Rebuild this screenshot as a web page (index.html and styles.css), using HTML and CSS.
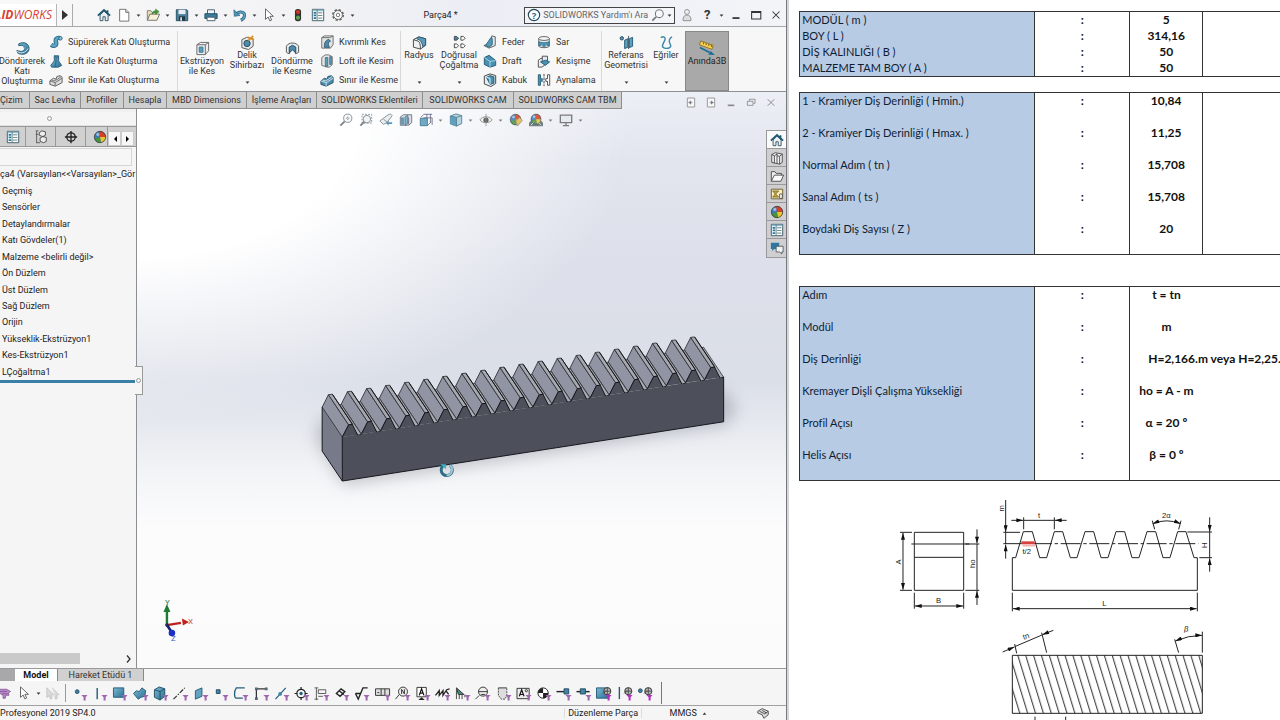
FILE: index.html
```html
<!DOCTYPE html>
<html lang="tr">
<head>
<meta charset="utf-8">
<title>Parça4</title>
<link rel="stylesheet" href="styles.css">
</head>
<body>
<svg class="defs" aria-hidden="true">
<defs>
<linearGradient id="blue" x1="0" y1="0" x2="1" y2="1"><stop offset="0" stop-color="#7db9d2"/><stop offset="1" stop-color="#2b6f93"/></linearGradient>
<symbol id="arr" viewBox="0 0 6 4"><path d="M0.5 0.5h5L3 3.5z" fill="#333"/></symbol>
<symbol id="home" viewBox="0 0 16 16"><path d="M3.5 8v6.5h3.300V10h2.600v4.500h3.300V8L8 3.500z" fill="#e8f0f4" stroke="#2c4a58"/><path d="M1 8.800L8 2.200l7 6.600M12 2.500v3" fill="none" stroke="#1f5873" stroke-width="2"/></symbol>
<symbol id="new" viewBox="0 0 16 16"><path d="M3 1.500h7L13.500 5v10H3z" fill="#fff" stroke="#666"/><path d="M10 1.500V5h3.500" fill="#ddd" stroke="#666"/></symbol>
<symbol id="open" viewBox="0 0 16 16"><path d="M1.500 14V3h4l1.500 2h5v2" fill="#eadfb6" stroke="#777"/><path d="M1.500 14L4.500 7h11l-3 7z" fill="#f7f1d8" stroke="#666"/><path d="M7 7c0-3 2-4 4-4V1l4 3.200-4 3V5.300c-2 0-3 .7-4 1.700z" fill="#449a38" stroke="#2c6f25" stroke-width=".5"/></symbol>
<symbol id="save" viewBox="0 0 16 16"><path d="M1.500 2h12l1 1v11.500h-13z" fill="#4a7f9b" stroke="#22485c"/><path d="M4 2h8v5H4z" fill="#e6eef2"/><path d="M4.500 9.500h7v5h-7z" fill="#203844"/><path d="M6 10.500h2v4H6z" fill="#ddd"/></symbol>
<symbol id="print" viewBox="0 0 16 16"><path d="M4 7V2h8v5" fill="#eef6fa" stroke="#456"/><path d="M1 6.500h14v5.500H1z" fill="#3c7b9a" stroke="#1d4a60"/><path d="M3.500 10.500h9v4h-9z" fill="#fff" stroke="#456"/></symbol>
<symbol id="undo" viewBox="0 0 16 16"><path d="M4 6.500c5-3.500 10-1.500 9 3-.3 2-1.500 3.500-4 4.500" fill="none" stroke="#22597a" stroke-width="3.400"/><path d="M4 6.500c5-3.500 10-1.500 9 3-.3 2-1.500 3.500-4 4.500" fill="none" stroke="#5a9fc0" stroke-width="2"/><path d="M1 2l.5 7.500 6.500-1z" fill="#4b92b5" stroke="#22597a" stroke-width=".7"/></symbol>
<symbol id="cursor" viewBox="0 0 16 16"><path d="M4 1v12l3-2.700 2 4.500 2-1-2-4.300h4z" fill="#fff" stroke="#555"/></symbol>
<symbol id="light" viewBox="0 0 16 16"><rect x="4.500" y="1" width="7" height="14" rx="3" fill="#333"/><circle cx="8" cy="4.500" r="2.300" fill="#d63323"/><circle cx="8" cy="11" r="2.300" fill="#55a748"/></symbol>
<symbol id="list" viewBox="0 0 16 16"><path d="M1.500 1.500h13v13h-13z" fill="#fff" stroke="#33525f"/><path d="M2 2h12v1.700H2z" fill="#8cbdd3"/><path d="M3 5.500h3M3 8.500h3M3 11.500h3" stroke="#2879a0" stroke-width="2"/><path d="M8 5.500h5M8 8.500h5M8 11.500h5M7 2v12" stroke="#577" stroke-width="1"/></symbol>
<symbol id="gear" viewBox="0 0 16 16"><circle cx="8" cy="8" r="5.800" fill="none" stroke="#666" stroke-width="2.200" stroke-dasharray="2.600 1.950"/><circle cx="8" cy="8" r="5" fill="#fff" stroke="#666"/><circle cx="8" cy="8" r="2" fill="#fff" stroke="#666"/></symbol>
<symbol id="help" viewBox="0 0 16 16"><circle cx="8" cy="8" r="6.500" fill="#fff" stroke="#244c60" stroke-width="1.300"/><text x="8" y="12" text-anchor="middle" class="svgb" font-size="11" fill="#1e6c92">?</text></symbol>
<symbol id="mag" viewBox="0 0 16 16"><circle cx="9.500" cy="6.500" r="4.500" fill="#f6f9fb" stroke="#777" stroke-width="1.200"/><path d="M6 10l-4.500 4.500" stroke="#777" stroke-width="2"/></symbol>
<symbol id="user" viewBox="0 0 16 16"><circle cx="8" cy="4.500" r="2.800" fill="#eee" stroke="#888"/><path d="M3.500 14.500c-.5-4 1.500-6.500 4.500-6.500s5 2.500 4.500 6.500z" fill="#ddd" stroke="#888"/></symbol>
<symbol id="revolve" viewBox="0 0 16 16"><path d="M4 3c6-3 11 0 11 5s-6 8-12 5l-1-3c5 2 8 1 8-2S8 4 4 5z" fill="url(#blue)" stroke="#235d7a"/><path d="M4 8c3 2 6 1 6-1M2 11c4 3 9 2 12-3" fill="none" stroke="#fff" stroke-width=".8"/></symbol>
<symbol id="sweep" viewBox="0 0 16 16"><path d="M2.500 11c4 3 6.500 0 5.500-3S8.500 2.500 13 3.500" fill="none" stroke="#245f7d" stroke-width="5"/><path d="M2.500 11c4 3 6.500 0 5.500-3S8.500 2.500 13 3.500" fill="none" stroke="#5ba3c3" stroke-width="3.200"/><circle cx="13" cy="3.800" r="2" fill="#8cc2d8" stroke="#245f7d"/></symbol>
<symbol id="loft" viewBox="0 0 16 16"><path d="M6 2h5v6l3.500 5-4 2H3l-1-2 4-5z" fill="url(#blue)" stroke="#235d7a"/><path d="M6 2l2 1.500h3M8 3.500V9l-1.500 6" stroke="#1c5270" fill="none" stroke-width=".8"/></symbol>
<symbol id="bound" viewBox="0 0 16 16"><path d="M1 9l4-3 3 1 1-3 4-1 2 2v6l-8 4-6-2z" fill="#ddd" stroke="#555"/><path d="M1 9l6 2 8-5M7 11v4M3 8l3 1 4-2 4-3" fill="none" stroke="#666"/></symbol>
<symbol id="boundblue" viewBox="0 0 16 16"><path d="M1 9l4-3 3 1 1-3 4-1 2 2v6l-8 4-6-2z" fill="#4d8eae" stroke="#234d62"/><path d="M1 9l6 2 8-5M7 11v4M3 8l3 1 4-2 4-3" fill="none" stroke="#dceaf1"/></symbol>
<symbol id="cutext" viewBox="0 0 16 16"><path d="M2 4l4-2.500h8.500v9L11 14.500H2z" fill="#eee" stroke="#666"/><path d="M2 4h9v10.500M11 4l3.500-2.500" fill="none" stroke="#666"/><path d="M4.500 6.500h4V12h-4z" fill="#5b9cba" stroke="#377795"/></symbol>
<symbol id="hole" viewBox="0 0 16 16"><path d="M2 5l5-2.500 7 1.500v8l-5 3.500-7-2z" fill="#ececec" stroke="#555"/><circle cx="7.500" cy="9" r="3.400" fill="#4c8bab" stroke="#244b60"/><path d="M9 6l5-5M8 2l3 2M12 4l3 1" stroke="#dd8f25" stroke-width="1.800"/></symbol>
<symbol id="cutrev" viewBox="0 0 16 16"><path d="M1.500 5.500C4 1 12 1 14.500 5.500V12c-1 1-2.500 1.500-3.500 1.500V9H5v4.500c-1.500 0-2.500-.5-3.500-1.500z" fill="#e8eef1" stroke="#555"/><path d="M8 4.500l3.500 2v6L8 9.500l-3.500 3v-6z" fill="#4c8bab" stroke="#244b60"/></symbol>
<symbol id="cutswp" viewBox="0 0 16 16"><path d="M2 3l3-2h10v10l-3 4H2z" fill="#e2e2e2" stroke="#666"/><path d="M2 3h9l4-2" fill="none" stroke="#666"/><path d="M5 14c0-5 1-8 5-9l2 2c-3 1-3 4-1 7z" fill="#4c8bab" stroke="#26536a"/></symbol>
<symbol id="cutlft" viewBox="0 0 16 16"><path d="M2 4l4-3h4l4 2v9l-3 3H8l-6-2z" fill="#e6e6e6" stroke="#666"/><path d="M6 4h3v10H6zM11 3h2v9h-2z" fill="#5d9bb8" stroke="#2c5a70" stroke-width=".7"/></symbol>
<symbol id="fillet" viewBox="0 0 16 16"><path d="M1.500 5L7 2l7.500 2v7L9 15l-7.500-2z" fill="#eef1f3" stroke="#444"/><path d="M5 4l2-2 7.500 2v6.500l-3 2C11 8 9 5 5 4z" fill="#5b9cba" stroke="#2c5a70"/><path d="M1.500 5l5 1.500c2 1 2.500 4 2.500 8.500" fill="none" stroke="#444"/></symbol>
<symbol id="lpat" viewBox="0 0 16 16"><g fill="#fff" stroke="#444"><path d="M9.500 1.500h2.500l2 2-2 2H9.500zM2.500 9.500H5l2 2-2 2H2.500zM9.500 9.500h2.500l2 2-2 2H9.500z"/><path d="M2.500 1.500H5l2 2-2 2H2.500z" fill="#3c86a8"/></g></symbol>
<symbol id="rib" viewBox="0 0 16 16"><path d="M1 12l8-3 1-8 4 1v10l-7 3z" fill="#dfe6ea" stroke="#555"/><path d="M3 12l6-9 1.500 1v7l-3.500 3z" fill="#5299ba" stroke="#235d7a"/></symbol>
<symbol id="draft" viewBox="0 0 16 16"><path d="M1.500 4L7 1.500l7.500 6V13L8 15l-6.500-3z" fill="#4890b2" stroke="#1d556f"/><path d="M1.500 4L8 8.500 14.500 7.500M8 8.500V15" stroke="#b4dceb" fill="none"/></symbol>
<symbol id="shell" viewBox="0 0 16 16"><path d="M1.500 3.500L8 1l6.500 2v9L9 15.500l-7.500-3z" fill="#e6edf0" stroke="#333"/><path d="M4 5l4-2 4.500 1.500v7L8 13z" fill="#4890b2" stroke="#1d556f"/><path d="M8 6v7M4 5l4 1" stroke="#fff"/></symbol>
<symbol id="wrap" viewBox="0 0 16 16"><path d="M2 4v9c2 2 10 2 12 0V4" fill="#e4edf1" stroke="#555"/><ellipse cx="8" cy="4" rx="6" ry="2.200" fill="#f6f8f9" stroke="#555"/><path d="M2 7.500c3 1.500 9 1.500 12 0v4.500h-3V9.500H9.500V13h-3V9.500H5V12H2z" fill="#4890b2" stroke="#235d7a" stroke-width=".6"/></symbol>
<symbol id="inter" viewBox="0 0 16 16"><path d="M1.500 7l3-2h4v8l-3 2h-4z" fill="#eee" stroke="#444"/><path d="M6 2.500h6v7H6z" fill="#dfeaf0" stroke="#444"/><path d="M4 9l6-2 4.500 2-5 4z" fill="#4890b2" stroke="#235d7a"/></symbol>
<symbol id="mirror" viewBox="0 0 16 16"><path d="M8 1v14" stroke="#333" stroke-dasharray="3 1"/><path d="M1.500 2v12H4v-4.500h2v-3H4V2z" fill="#4890b2" stroke="#235d7a"/><path d="M14.500 2v12H12v-4.500h-2v-3h2V2z" fill="#fff" stroke="#444"/></symbol>
<symbol id="refg" viewBox="0 0 16 16"><circle cx="3" cy="3.500" r="1.800" fill="#5b9cba" stroke="#244b60"/><path d="M6 5.500l3.500-1.500v9L6 14.500zM11 4l3.500-1.500V12L11 13.500z" fill="#5ba0bf" stroke="#235d7a"/><path d="M10.200 1v14" stroke="#456"/></symbol>
<symbol id="curves" viewBox="0 0 16 16"><path d="M2 3c2-2 6-1 4 3s-4 7 0 8 8-1 6-4-1-7 2-8" fill="none" stroke="#3c86a8" stroke-width="1.500"/></symbol>
<symbol id="instant" viewBox="0 0 22 18"><path d="M4 1l14 5-1.500 4.500L2.500 5.500z" fill="#f5cf55" stroke="#8d7022"/><path d="M7 2.500v2.300M10 3.500v2.300M13 4.500v2.300M16 5.500v2.300" stroke="#6d5714"/><path d="M3 8.500l11 5.500" stroke="#1e6d95" stroke-width="2"/><path d="M20 17l-7.500-.5 2.500-4z" fill="#1e6d95"/></symbol>
<symbol id="tree" viewBox="0 0 16 16"><path d="M2 1h3M3 1v14M3 14.500h4M2 5h3" stroke="#555" fill="none"/><path d="M6 3l3-2 4 1v4l-3 1.500L6 6zM7 9l3-1.500 4 1V13l-3 1.500L7 13z" fill="#eee" stroke="#444"/></symbol>
<symbol id="target" viewBox="0 0 16 16"><circle cx="8" cy="8" r="4.800" fill="none" stroke="#222" stroke-width="1.500"/><path d="M8 1v14M1 8h14" stroke="#222" stroke-width="1.500"/></symbol>
<symbol id="ball" viewBox="0 0 16 16"><circle cx="8" cy="8" r="6.500" fill="#3c79b8"/><path d="M8 8L7 1.500A6.500 6.500 0 0 1 14.500 8z" fill="#d64025"/><path d="M8 8l6.500 0A6.500 6.500 0 0 1 9 14.500z" fill="#e9c52f"/><path d="M8 8l1 6.500A6.500 6.500 0 0 1 1.700 10z" fill="#48933e"/><circle cx="8" cy="8" r="6.500" fill="none" stroke="#333" stroke-width=".8"/><circle cx="5.500" cy="5" r="1.800" fill="#fff" opacity=".5"/></symbol>
<symbol id="zoomfit" viewBox="0 0 16 16"><circle cx="10" cy="6" r="4.700" fill="#f7fafc" stroke="#68727a"/><path d="M6.500 9.500l-5 5" stroke="#68727a" stroke-width="2.200"/><path d="M8 6h4M10 4v4" stroke="#68727a" stroke-dasharray="1.500 1"/></symbol>
<symbol id="zoomarea" viewBox="0 0 16 16"><path d="M3.500 1.500h11v10h-11z" fill="none" stroke="#68727a" stroke-dasharray="2 1.500"/><circle cx="9" cy="7" r="4.300" fill="#eef3f6" stroke="#68727a"/><path d="M6 10l-4.500 4.500" stroke="#68727a" stroke-width="2.200"/></symbol>
<symbol id="prev" viewBox="0 0 16 16"><path d="M1 9l8-6 4-2 2 2-6 8-4 2z" fill="#e8edf0" stroke="#68727a"/><path d="M5 7l4 3" stroke="#68727a"/><path d="M8 11.500l3-3v2h4v2h-4v2z" fill="#3d86aa"/></symbol>
<symbol id="section" viewBox="0 0 16 16"><path d="M1.500 4.500L5 2h9.500v9L11 14H1.500z" fill="#d8dde2" stroke="#556"/><path d="M2 5h4v8.500H2z" fill="#4c8bab"/><path d="M7 4.500l3-2V12l-3 2z" fill="#73aac4" stroke="#2e6480"/><path d="M11 5v8" stroke="#556"/></symbol>
<symbol id="view" viewBox="0 0 16 16"><path d="M5 1.500h10M5 5.500h10v8M9 1v9M13 1v10M2 5l3-3" fill="none" stroke="#557"/><path d="M1.500 6h8v8.500h-8z" fill="#579cbd" stroke="#23607f"/><path d="M9.500 14.500L14 10" stroke="#557"/></symbol>
<symbol id="cube" viewBox="0 0 16 16"><path d="M1.500 3.500L8 1l6.500 2v9L8.500 15l-7-2.500z" fill="#a8cfdf" stroke="#38677d"/><path d="M1.500 3.500l7 1.500V15l-7-2.500z" fill="#4a90b2"/><path d="M1.500 3.500l7 1.500 6-2M8.500 5v10" fill="none" stroke="#38677d"/></symbol>
<symbol id="eye" viewBox="0 0 16 16"><path d="M1 8c3-5 11-5 14 0-3 4-11 4-14 0z" fill="#f2f2f2" stroke="#777"/><circle cx="8" cy="8" r="3" fill="#444"/><path d="M8 1v14" stroke="#888"/></symbol>
<symbol id="appear" viewBox="0 0 16 16"><use href="#ball" width="15" height="15" x="0" y="0"/><path d="M8 9l4-4 3.500 3.500-6 6.500z" fill="#e3b64c" stroke="#777" stroke-width=".7"/></symbol>
<symbol id="scene" viewBox="0 0 16 16"><path d="M0 11l3-3h10l3 3v4H0z" fill="#5a6b70"/><use href="#ball" width="14" height="14" x="1" y="0"/><path d="M2 14l3-3M11 11l3 3" stroke="#ddd"/></symbol>
<symbol id="monitor" viewBox="0 0 16 16"><path d="M1.500 2.500h13v8.500h-13z" fill="#e4eaf1" stroke="#666" stroke-width="1.500"/><path d="M8 11v3M4.500 14.500h7" stroke="#666" stroke-width="1.500"/></symbol>
<symbol id="dockl" viewBox="0 0 16 16"><path d="M3.500 2.500h9v11h-9z" fill="#f6f7f9" stroke="#888"/><path d="M5 8l3-2v4zM8.500 8H10" fill="#777" stroke="#777" stroke-width=".6"/></symbol>
<symbol id="dockr" viewBox="0 0 16 16"><path d="M3.500 2.500h9v11h-9z" fill="#f6f7f9" stroke="#888"/><path d="M11 8L8 6v4zM7.500 8H6" fill="#777" stroke="#777" stroke-width=".6"/></symbol>
<symbol id="min" viewBox="0 0 16 16"><path d="M4 11.500h8" stroke="currentColor" stroke-width="2"/></symbol>
<symbol id="max" viewBox="0 0 16 16"><path d="M3 4h10.500v8.500H3zM3 5h10.500" fill="none" stroke="currentColor" stroke-width="1.200"/></symbol>
<symbol id="restore" viewBox="0 0 16 16"><path d="M3.500 6.500h7v5h-7zM6 6V4h7v5h-2" fill="none" stroke="currentColor"/></symbol>
<symbol id="close" viewBox="0 0 16 16"><path d="M4 4l8 8M12 4l-8 8" stroke="currentColor" stroke-width="1.200"/></symbol>
<symbol id="lib" viewBox="0 0 16 16"><path d="M2 4l4-2 8 1.500V13l-3 2-9-2z" fill="#f2f2f2" stroke="#444"/><path d="M2 4l3 1.500V14M5 5.500l3-2M8 3v11.500M8 5.500l3 .5 3-2.500M11 6v9" fill="none" stroke="#444"/></symbol>
<symbol id="folder" viewBox="0 0 16 16"><path d="M1.500 14V3h4l1.500 2h6v2" fill="#eee" stroke="#444"/><path d="M1.500 14L5 7h10.500l-3 7z" fill="#fafafa" stroke="#444"/></symbol>
<symbol id="palette" viewBox="0 0 16 16"><path d="M1.500 2.500h13v11h-13z" fill="#f6efc5" stroke="#665320"/><path d="M3 4.500h7L6.500 8l3.500 3.500H3L6 8z" fill="#cda72f" stroke="#66521d" stroke-width=".8"/><path d="M11 8h3v5h-3z" fill="#fff" stroke="#555"/></symbol>
<symbol id="forum" viewBox="0 0 16 16"><path d="M1 2h9.500v7H5l-2.500 2.500V9H1z" fill="#2d78a0"/><path d="M7 6h8v6.500h-1.500v2.300L11 12.500H7z" fill="#eef2f5" stroke="#555"/></symbol>
<symbol id="funnel" viewBox="0 0 18 16"><path d="M10.500 9.500h6.500l-2 2.500v3.500h-2.200V12z" fill="#a066b0"/></symbol>
<symbol id="fball" viewBox="0 0 18 16"><circle cx="12.500" cy="5.500" r="3.800" fill="#bbb" stroke="#333"/><path d="M9 5.500h7M12.500 2v7M8 8l3-3" stroke="#333" stroke-width=".8"/><path d="M10.500 9.500h6.500l-2 2.500v3.500h-2.200V12z" fill="#b52fc4"/></symbol>
<g id="t1"><path class="floor" d="M338.300 406.200L341.600 404.900L361.800 435L358.500 436.500Z"/><path class="flank" d="M322.500 407.700L328.800 395.200L349 425.400L342.700 437.700Z"/><path class="top" d="M328.800 395.200L332.700 394.700L352.900 425L349 425.400Z"/><path class="edge" d="M332.900 395L353 425"/></g>
<g id="t2"><use href="#t1" x="19.100" y="-3.020"/><use href="#t1"/></g>
<g id="t4"><use href="#t2" x="38.200" y="-6.040"/><use href="#t2"/></g>
<g id="t8"><use href="#t4" x="76.400" y="-12.080"/><use href="#t4"/></g>
<g id="t16"><use href="#t8" x="152.800" y="-24.160"/><use href="#t8"/></g>
<path id="p1" class="front" d="M342.700 437.700L349 425.400L352.700 425L358.500 436.500L361.800 434.900"/>
<g id="p2"><use href="#p1" x="19.100" y="-3.020"/><use href="#p1"/></g>
<g id="p4"><use href="#p2" x="38.200" y="-6.040"/><use href="#p2"/></g>
<g id="p8"><use href="#p4" x="76.400" y="-12.080"/><use href="#p4"/></g>
<g id="p16"><use href="#p8" x="152.800" y="-24.160"/><use href="#p8"/></g>
<filter id="soft" x="-20%" y="-50%" width="140%" height="200%"><feGaussianBlur stdDeviation="8"/></filter>
<pattern id="hatch" width="23.600" height="40" patternUnits="userSpaceOnUse" patternTransform="translate(270 496) skewX(17)"><path d="M2 0V40" stroke="#222" stroke-width="3"/></pattern>
<marker id="ah" viewBox="0 0 10 6" refX="10" refY="3" markerWidth="24" markerHeight="12" markerUnits="userSpaceOnUse" orient="auto-start-reverse"><path d="M0 0L10 3L0 6z" fill="#111"/></marker>
</defs>
</svg>

<main class="app">
  <header class="title">
    <div class="logo"><span><b>SOLID</b>WORKS</span></div>
    <button class="play" aria-label="Menü"><svg viewBox="0 0 6 10"><path d="M0 0L6 5L0 10z" fill="#333"/></svg></button>
    <nav class="quick">
      <button aria-label="Ana sayfa"><svg class="i"><use href="#home"/></svg></button>
      <button aria-label="Yeni"><svg class="i"><use href="#new"/></svg></button><svg class="a"><use href="#arr"/></svg>
      <button aria-label="Aç"><svg class="i"><use href="#open"/></svg></button><svg class="a"><use href="#arr"/></svg>
      <button aria-label="Kaydet"><svg class="i"><use href="#save"/></svg></button><svg class="a"><use href="#arr"/></svg>
      <button aria-label="Yazdır"><svg class="i"><use href="#print"/></svg></button><svg class="a"><use href="#arr"/></svg>
      <button aria-label="Geri al"><svg class="i"><use href="#undo"/></svg></button><svg class="a"><use href="#arr"/></svg>
      <button aria-label="Seç"><svg class="i"><use href="#cursor"/></svg></button><svg class="a"><use href="#arr"/></svg>
      <button aria-label="Yeniden oluştur"><svg class="i"><use href="#light"/></svg></button>
      <button aria-label="Dosya özellikleri"><svg class="i"><use href="#list"/></svg></button>
      <button aria-label="Seçenekler"><svg class="i"><use href="#gear"/></svg></button><svg class="a"><use href="#arr"/></svg>
    </nav>
    <h1>Parça4 *</h1>
    <label class="search"><svg class="i"><use href="#help"/></svg><input type="text" placeholder="SOLIDWORKS Yardım'ı Ara" aria-label="Yardım ara"><svg class="i"><use href="#mag"/></svg><svg class="a"><use href="#arr"/></svg></label>
    <div class="wctl">
      <button aria-label="Oturum"><svg class="i"><use href="#user"/></svg></button>
      <button class="q">?</button><svg class="a"><use href="#arr"/></svg>
      <button aria-label="Küçült"><svg class="i"><use href="#min"/></svg></button>
      <button aria-label="Büyüt"><svg class="i"><use href="#max"/></svg></button>
      <button aria-label="Kapat"><svg class="i"><use href="#close"/></svg></button>
    </div>
  </header>

  <section class="ribbon">
    <button class="big mid w44"><svg class="i"><use href="#revolve"/></svg><span>Döndürerek<br>Katı<br>Oluşturma</span></button>
    <div class="stack s1">
      <button><svg class="i"><use href="#sweep"/></svg>Süpürerek Katı Oluşturma</button>
      <button><svg class="i"><use href="#loft"/></svg>Loft ile Katı Oluşturma</button>
      <button><svg class="i"><use href="#bound"/></svg>Sınır ile Katı Oluşturma</button>
    </div>
    <i class="sep"></i>
    <button class="big mid w46"><svg class="i"><use href="#cutext"/></svg><span>Ekstrüzyon<br>ile Kes</span></button>
    <button class="big w44"><svg class="i"><use href="#hole"/></svg><span>Delik<br>Sihirbazı</span><svg class="a"><use href="#arr"/></svg></button>
    <button class="big mid w46"><svg class="i"><use href="#cutrev"/></svg><span>Döndürme<br>ile Kesme</span></button>
    <div class="stack s2">
      <button><svg class="i"><use href="#cutswp"/></svg>Kıvrımlı Kes</button>
      <button><svg class="i"><use href="#cutlft"/></svg>Loft ile Kesim</button>
      <button><svg class="i"><use href="#boundblue"/></svg>Sınır ile Kesme</button>
    </div>
    <i class="sep"></i>
    <button class="big w34"><svg class="i"><use href="#fillet"/></svg><span>Radyus</span><svg class="a"><use href="#arr"/></svg></button>
    <button class="big w46"><svg class="i"><use href="#lpat"/></svg><span>Doğrusal<br>Çoğaltma</span><svg class="a"><use href="#arr"/></svg></button>
    <div class="stack s3">
      <button><svg class="i"><use href="#rib"/></svg>Feder</button>
      <button><svg class="i"><use href="#draft"/></svg>Draft</button>
      <button><svg class="i"><use href="#shell"/></svg>Kabuk</button>
    </div>
    <div class="stack s4">
      <button><svg class="i"><use href="#wrap"/></svg>Sar</button>
      <button><svg class="i"><use href="#inter"/></svg>Kesişme</button>
      <button><svg class="i"><use href="#mirror"/></svg>Aynalama</button>
    </div>
    <i class="sep"></i>
    <button class="big w46"><svg class="i"><use href="#refg"/></svg><span>Referans<br>Geometrisi</span><svg class="a"><use href="#arr"/></svg></button>
    <button class="big w34"><svg class="i"><use href="#curves"/></svg><span>Eğriler</span><svg class="a"><use href="#arr"/></svg></button>
    <button class="big on w44"><svg class="wide"><use href="#instant"/></svg><span>Anında3B</span></button>
  </section>

  <section class="stage">
    <div class="tabrow">
      <nav class="tabs"><button>Çizim</button><button>Sac Levha</button><button>Profiller</button><button>Hesapla</button><button>MBD Dimensions</button><button>İşleme Araçları</button><button>SOLIDWORKS Eklentileri</button><button>SOLIDWORKS CAM</button><button>SOLIDWORKS CAM TBM</button></nav>
      <div class="docctl">
        <button aria-label="Sola yasla"><svg class="i"><use href="#dockl"/></svg></button>
        <button aria-label="Sağa yasla"><svg class="i"><use href="#dockr"/></svg></button>
        <button aria-label="Belgeyi küçült"><svg class="i"><use href="#min"/></svg></button>
        <button aria-label="Belgeyi geri yükle"><svg class="i"><use href="#restore"/></svg></button>
        <button aria-label="Belgeyi kapat"><svg class="i"><use href="#close"/></svg></button>
      </div>
    </div>
    <div class="split">
      <aside class="panel">
        <div class="grip"><i></i></div>
        <nav class="ptabs">
          <button aria-label="Özellikler"><svg class="i"><use href="#list"/></svg></button>
          <button aria-label="Konfigürasyon"><svg class="i"><use href="#tree"/></svg></button>
          <button aria-label="DimXpert"><svg class="i"><use href="#target"/></svg></button>
          <button aria-label="Görünüm"><svg class="i"><use href="#ball"/></svg></button>
          <button class="sm" aria-label="Önceki"><svg viewBox="0 0 4 6"><path d="M4 0L1 3L4 6z"/></svg></button>
          <button class="sm" aria-label="Sonraki"><svg viewBox="0 0 4 6"><path d="M0 0L3 3L0 6z"/></svg></button>
        </nav>
        <input class="filter" type="text" aria-label="Filtre">
        <ul class="ftree">
          <li class="root">ça4&nbsp;(Varsayılan&lt;&lt;Varsayılan&gt;_Gör</li>
          <li>Geçmiş</li><li>Sensörler</li><li>Detaylandırmalar</li><li>Katı Gövdeler(1)</li><li>Malzeme &lt;belirli değil&gt;</li><li>Ön Düzlem</li><li>Üst Düzlem</li><li>Sağ Düzlem</li><li>Orijin</li><li>Yükseklik-Ekstrüzyon1</li><li>Kes-Ekstrüzyon1</li><li>LÇoğaltma1</li>
        </ul>
        <div class="rollback"></div>
        <div class="hscroll"><i></i><svg viewBox="0 0 5 8"><path d="M1 0.500L4 4L1 7.500" fill="none" stroke="#333" stroke-width="1.300"/></svg></div>
        <div class="bump"><i></i></div>
      </aside>
      <div class="view">
        <svg class="canvas" viewBox="137 109 650 560" preserveAspectRatio="xMinYMin meet">
          <path d="M316 440L344 486L728 425L738 408L724 390L320 420Z" fill="#70757f" opacity=".38" filter="url(#soft)"/>
          <g class="rack">
            <path class="end" d="M322.500 407.700L342.700 437.700V481.700L322.500 451.700Z"/>
            <use href="#t4" x="305.600" y="-48.320"/><use href="#t16"/>
            <path class="body" d="M342.700 437.700L724.700 377.500V422.300L342.700 481.700Z"/>
            <use href="#p16"/><use href="#p4" x="305.600" y="-48.320"/>
            <path d="M344 439L723.500 379.200" class="seam"/>
            <path d="M322.500 407.700V451.700L342.700 481.700L724.700 422.300V378M342.700 437.700V481.700" fill="none" stroke="#15171c"/>
          </g>
          <path d="M450.500 466A5.600 5.600 0 1 1 443.500 466.500" fill="none" stroke="#2d6e86" stroke-width="3"/><path d="M450.500 466A5.600 5.600 0 0 1 447 476" fill="none" stroke="#9cc6d4" stroke-width="2"/><path d="M441 465h5.500v5z" fill="#35b5c2"/>
          <g>
            <path d="M167 626V610" stroke="#1c7a35" stroke-width="2.400"/><path d="M167 605l-3.500 8h7z" fill="#1c7a35"/>
            <path d="M167 626l14-2.200" stroke="#c2201d" stroke-width="2.400"/><path d="M189 623l-7-3.500 1 7z" fill="#c2201d"/>
            <path d="M167 626l4 6" stroke="#151d7a" stroke-width="2.600"/><circle cx="172" cy="634" r="3.300" fill="#1c30c4"/><circle cx="167" cy="626" r="1.800" fill="#222b55"/>
            <text x="165" y="606" class="ax" fill="#357a45">Y</text><text x="188" y="625" class="ax" fill="#c84a43">X</text><text x="171" y="642" class="ax" fill="#4753b0">Z</text>
          </g>
        </svg>
        <nav class="hud">
          <button aria-label="Sığdır"><svg class="i"><use href="#zoomfit"/></svg></button>
          <button aria-label="Alana yakınlaş"><svg class="i"><use href="#zoomarea"/></svg></button>
          <button aria-label="Önceki görünüm"><svg class="i"><use href="#prev"/></svg></button>
          <button aria-label="Kesit"><svg class="i"><use href="#section"/></svg></button>
          <button aria-label="Yönlendirme"><svg class="i"><use href="#view"/></svg></button><svg class="a"><use href="#arr"/></svg>
          <button aria-label="Görüntü stili"><svg class="i"><use href="#cube"/></svg></button><svg class="a"><use href="#arr"/></svg>
          <button aria-label="Gizle/Göster"><svg class="i"><use href="#eye"/></svg></button><svg class="a"><use href="#arr"/></svg>
          <button aria-label="Görünüm düzenle"><svg class="i"><use href="#appear"/></svg></button>
          <button aria-label="Sahne"><svg class="i"><use href="#scene"/></svg></button><svg class="a"><use href="#arr"/></svg>
          <button aria-label="Ayarlar"><svg class="i"><use href="#monitor"/></svg></button><svg class="a"><use href="#arr"/></svg>
        </nav>
        <nav class="side">
          <button class="sel" aria-label="Kaynaklar"><svg class="i"><use href="#home"/></svg></button>
          <button aria-label="Kitaplık"><svg class="i"><use href="#lib"/></svg></button>
          <button aria-label="Dosya gezgini"><svg class="i"><use href="#folder"/></svg></button>
          <button aria-label="Görünüm paleti"><svg class="i"><use href="#palette"/></svg></button>
          <button aria-label="Görünümler"><svg class="i"><use href="#ball"/></svg></button>
          <button aria-label="Özel özellikler"><svg class="i"><use href="#list"/></svg></button>
          <button aria-label="Forum"><svg class="i"><use href="#forum"/></svg></button>
        </nav>
      </div>
    </div>
  </section>

  <nav class="btabs"><i></i><button class="cur">Model</button><button>Hareket Etüdü 1</button></nav>

  <section class="fbar">
    <div class="lead">
      <svg class="i" viewBox="0 0 16 16"><path d="M-2 3h11l5 3-3 2 1 3H8l-1 4H4v-4L-1 8z" fill="#b78ac6" stroke="#7d4a90"/><path d="M0 6h9M3 9h7" stroke="#7d4a90"/></svg>
      <svg class="i"><use href="#cursor"/></svg><svg class="a"><use href="#arr"/></svg><svg class="i faded" viewBox="0 0 16 16"><path d="M1 2l8 8H6l1 4-2 1-1-4-3 2zM7 2l8 8h-3l1 4-2 1-1-4" fill="#bbb" stroke="#888"/></svg>
    </div>
    <div class="filters">
      <button aria-label="Köşe"><svg viewBox="0 0 18 16"><circle cx="6" cy="6" r="2" fill="#3c86a8" stroke="#244b60"/><use href="#funnel"/></svg></button>
      <button aria-label="Kenar"><svg viewBox="0 0 18 16"><path d="M6 2v12" stroke="#235d7a" stroke-width="1.500"/><use href="#funnel"/></svg></button>
      <button aria-label="Yüz"><svg viewBox="0 0 18 16"><path d="M2 2h11v10H2z" fill="url(#blue)" stroke="#235d7a"/><use href="#funnel"/></svg></button>
      <button aria-label="Yüzey"><svg viewBox="0 0 18 16"><path d="M1 8l3-3 3 1 3-4 4 3-1 6-4 1-3 2z" fill="url(#blue)" stroke="#235d7a"/><use href="#funnel"/></svg></button>
      <button aria-label="Katı"><svg viewBox="0 0 18 16"><path d="M2 4l5-3 6 2v8l-5 4-6-3z" fill="url(#blue)" stroke="#1f4f66"/><path d="M2 4l6 2 5-3M8 6v9" fill="none" stroke="#1f4f66"/><use href="#funnel"/></svg></button>
      <button aria-label="Eksen"><svg viewBox="0 0 18 16"><path d="M1 14L13 2" stroke="#333" stroke-width="1.300" stroke-dasharray="5 1.500 1.500 1.500"/><use href="#funnel"/></svg></button>
      <button aria-label="Düzlem"><svg viewBox="0 0 18 16"><path d="M3 5l7-3v9l-7 3z" fill="#64a3bf" stroke="#235d7a"/><use href="#funnel"/></svg></button>
      <button aria-label="Nokta"><svg viewBox="0 0 18 16"><path d="M4 4h4v4H4z" fill="#3c86a8" stroke="#244b60"/><use href="#funnel"/></svg></button>
      <button aria-label="Çizim"><svg viewBox="0 0 18 16"><path d="M13 2H4c-3 4-2 11 0 11h7" fill="none" stroke="#245f7d" stroke-width="1.400"/><use href="#funnel"/></svg></button>
      <button aria-label="Segment"><svg viewBox="0 0 18 16"><path d="M3 14V3h11" fill="none" stroke="#333" stroke-width="1.300"/><path d="M1.500 1.500h3v3h-3zM12 1.500h3v3h-3zM1.500 12h3v3h-3z" fill="#567"/><use href="#funnel"/></svg></button>
      <button aria-label="Orta nokta"><svg viewBox="0 0 18 16"><path d="M2 14L13 2" stroke="#245f7d" stroke-width="1.300"/><circle cx="7" cy="8.500" r="2" fill="#3c86a8"/><use href="#funnel"/></svg></button>
      <button aria-label="Merkez"><svg viewBox="0 0 18 16"><circle cx="8" cy="8" r="4.500" fill="none" stroke="#222" stroke-width="1.300"/><circle cx="8" cy="8" r="1.800" fill="#245f7d"/><path d="M8 1v3M8 12v3M1 8h3M12 8h3" stroke="#222" stroke-width="1.300"/><use href="#funnel"/></svg></button>
      <button aria-label="Merkez çizgisi"><svg viewBox="0 0 18 16"><path d="M3 2v13M1 2h4M1 14h4M5 4h8v4H5zM5 11h5" fill="none" stroke="#555"/><use href="#funnel"/></svg></button>
      <button aria-label="Ölçü"><svg viewBox="0 0 18 16"><path d="M3 8l5-5 4 3-5 5zM6 5l5 4" fill="none" stroke="#222" stroke-width="1.500"/><use href="#funnel"/></svg></button>
      <button aria-label="Yüzey işareti"><svg viewBox="0 0 18 16"><path d="M2 8h5M2 8l3 6 5-12h5" fill="none" stroke="#222" stroke-width="1.400"/><use href="#funnel"/></svg></button>
      <button aria-label="Geometrik tolerans"><svg viewBox="0 0 18 16"><path d="M1 3h15v7H1zM7 3v7M11 3v7M3 7h2" fill="#ddd" stroke="#333"/><use href="#funnel"/></svg></button>
      <button aria-label="Not"><svg viewBox="0 0 18 16"><circle cx="9" cy="6" r="4.800" fill="#eee" stroke="#333"/><path d="M7.500 8.500v-5l3 5v-5M5 9l-4 5" fill="none" stroke="#333"/><use href="#funnel"/></svg></button>
      <button aria-label="Referans"><svg viewBox="0 0 18 16"><path d="M2.500 1.500h10v10h-10z" fill="#fff" stroke="#333"/><path d="M5 10l2.500-7L10 10M6 7.500h3" fill="none" stroke="#111" stroke-width="1.300"/><path d="M4 15h7l-3.500-3z" fill="#222"/><use href="#funnel"/></svg></button>
      <button aria-label="Kaynak"><svg viewBox="0 0 18 16"><path d="M1 10l4-5 0 5 4-5v5l4-6 3-1M12 5l3 4" fill="none" stroke="#222" stroke-width="1.400"/><use href="#funnel"/></svg></button>
      <button aria-label="Kaynak dolgusu"><svg viewBox="0 0 18 16"><path d="M2 2l2 7h6z" fill="#4b8a80" stroke="#333"/><path d="M2 2v12M5 9v5M8 9v5M11 9v3" stroke="#444"/><use href="#funnel"/></svg></button>
      <button aria-label="Referans hedefi"><svg viewBox="0 0 18 16"><circle cx="9" cy="6" r="4.800" fill="#eee" stroke="#333"/><path d="M4 6h10M5 10l-4 4M7 9h4" stroke="#333"/><use href="#funnel"/></svg></button>
      <button aria-label="Kozmetik diş"><svg viewBox="0 0 18 16"><path d="M3 2v8l3 4h4l2-4V2" fill="#ddd" stroke="#444" stroke-dasharray="2 1"/><path d="M3 2h9" stroke="#333"/><use href="#funnel"/></svg></button>
      <button aria-label="Blok"><svg viewBox="0 0 18 16"><path d="M1.500 2.500h13v11h-13z" fill="#eee" stroke="#333"/><path d="M4 11l2.500-7L9 11M5 9h3" fill="none" stroke="#111" stroke-width="1.200"/><circle cx="11.500" cy="5" r="1.200" fill="none" stroke="#333"/><use href="#funnel"/></svg></button>
      <button aria-label="Kütle merkezi"><svg viewBox="0 0 18 16"><circle cx="8" cy="7.500" r="5.500" fill="#fff" stroke="#222"/><path d="M8 2v5.500H2.500A5.500 5.500 0 0 1 8 2zM8 13V7.500h5.500A5.500 5.500 0 0 1 8 13z" fill="#222"/><use href="#funnel"/></svg></button>
      <button aria-label="Uç bağlantı"><svg viewBox="0 0 18 16"><path d="M1 6h9" stroke="#222" stroke-width="1.500"/><path d="M9 3h5v5.500H9z" fill="#3c86a8" stroke="#244b60"/><use href="#funnel"/></svg></button>
      <button aria-label="Ara bağlantı"><svg viewBox="0 0 18 16"><path d="M1 6h14" stroke="#222" stroke-width="1.500"/><path d="M5 3h5.500v5.500H5z" fill="#3c86a8" stroke="#244b60"/><use href="#funnel"/></svg></button>
      <button aria-label="Ağ yüzü"><svg viewBox="0 0 18 16"><path d="M1 2h13v11H1z" fill="url(#blue)" stroke="#235d7a"/><use href="#fball"/></svg></button>
      <button aria-label="Ağ kenarı"><svg viewBox="0 0 18 16"><path d="M3 1v13" stroke="#235d7a" stroke-width="1.500"/><use href="#fball"/></svg></button>
      <button aria-label="Ağ köşesi"><svg viewBox="0 0 18 16"><circle cx="4" cy="5" r="2" fill="#3c86a8" stroke="#244b60"/><use href="#fball"/></svg></button>
    </div>
    <i class="sep"></i>
  </section>

  <footer class="status"><span class="ver">Profesyonel 2019 SP4.0</span><span class="mode">Düzenleme Parça</span><button class="unit">MMGS <svg class="a up"><use href="#arr"/></svg></button><svg class="i tag" viewBox="0 0 16 16"><path d="M2 6l5-3 7 3v4l-5 4-2-4-5-2z" fill="#ddd" stroke="#444"/><path d="M4 6l6 3 4-3M7 5l5 3" fill="none" stroke="#444"/></svg></footer>
</main>

<section class="sheet">
  <table class="t-a">
    <colgroup><col class="c1"><col class="c2"><col class="c3"><col></colgroup>
    <tr><th>MODÜL ( m )</th><td>:</td><td>5</td><td></td></tr>
    <tr><th>BOY ( L )</th><td>:</td><td>314,16</td><td></td></tr>
    <tr><th>DİŞ KALINLIĞI ( B )</th><td>:</td><td>50</td><td></td></tr>
    <tr><th>MALZEME TAM BOY ( A )</th><td>:</td><td>50</td><td></td></tr>
  </table>
  <table class="t-b">
    <colgroup><col class="c1"><col class="c2"><col class="c3"><col></colgroup>
    <tr><th>1 - Kramiyer Diş Derinliği ( Hmin.)</th><td>:</td><td>10,84</td><td></td></tr>
    <tr><th>2 - Kramiyer Diş Derinliği ( Hmax. )</th><td>:</td><td>11,25</td><td></td></tr>
    <tr><th>Normal Adım ( tn )</th><td>:</td><td>15,708</td><td></td></tr>
    <tr><th>Sanal Adım ( ts )</th><td>:</td><td>15,708</td><td></td></tr>
    <tr><th>Boydaki Diş Sayısı ( Z )</th><td>:</td><td>20</td><td></td></tr>
  </table>
  <table class="t-b t-c">
    <colgroup><col class="c1"><col class="c2"><col class="c3"><col></colgroup>
    <tr><th>Adım</th><td>:</td><td>t = tn</td><td></td></tr>
    <tr><th>Modül</th><td>:</td><td>m</td><td></td></tr>
    <tr><th>Diş Derinliği</th><td>:</td><td class="long" colspan="2">H=2,166.m veya H=2,25.m</td></tr>
    <tr><th>Kremayer Dişli Çalışma Yüksekliği</th><td>:</td><td>ho = A - m</td><td></td></tr>
    <tr><th>Profil Açısı</th><td>:</td><td>α = 20 º</td><td></td></tr>
    <tr><th>Helis Açısı</th><td>:</td><td>β = 0 º</td><td></td></tr>
  </table>
  <svg class="drawing" viewBox="790 490 490 230">
    <g transform="translate(880 490) scale(.33333)" fill="none" stroke="#222" stroke-width="3">
      <path d="M103 127H251V301H103ZM103 202H251M94 162H268"/>
      <path d="M60 127H96M60 301H96M256 162H298M256 301H298M103 308V356M251 308V356"/>
      <g marker-start="url(#ah)" marker-end="url(#ah)">
        <path d="M69 129V299"/><path d="M105 348H249"/><path d="M399 356H950"/>
        <path d="M818 101Q860 84 902 101"/><path d="M886 453Q925 436 966 436"/>
      </g>
      <path d="M291 162V301"/>
      <path d="M397 301V203H407L430 125H457L479 203H500L523 125H548L571 203H591L615 125H641L663 203H684L708 125H734L756 203H777L801 125H827L849 203H870L893 125H918L942 203H952V301Z"/>
      <path d="M370 161H955" stroke-dasharray="60 8 10 8"/>
      <path d="M424 158H464" stroke="#d8423f" stroke-width="8"/><path d="M428 166H466" stroke="#f3b3b0" stroke-width="7"/>
      <path d="M370 127H420M377 127V162M431 82V118M523 82V118M431 91H523M922 126H996M958 203H996M989 126V203M397 308V364M952 308V364"/>
      <g marker-end="url(#ah)">
        <path d="M291 118V160"/><path d="M291 345V303"/><path d="M377 30V126"/><path d="M377 206V164"/><path d="M394 91H429"/><path d="M560 91H525"/><path d="M989 82V125"/><path d="M989 245V205"/><path d="M368 486L403 471"/><path d="M520 421L487 434"/>
      </g>
      <path d="M817 92L824 118M903 92L896 118"/>
      <path d="M397 496H967V670H397Z" fill="url(#hatch)"/>
      <path d="M404 462L410 490M485 428L500 488M404 470L486 435M884 448L896 488M967 425V488M465 680V690M557 680V690"/>
      <g class="dim">
        <text x="477" y="83">t</text><text x="859" y="83">2α</text><text x="440" y="192">t/2</text><text x="673" y="347">L</text><text x="176" y="338">B</text>
        <text transform="translate(63 216) rotate(-90)">A</text><text transform="translate(284 221) rotate(-90)">ho</text><text transform="translate(372 55) rotate(-90)">m</text><text transform="translate(981 166) rotate(-90)">H</text>
        <text transform="translate(440 446) rotate(-18)">tn</text><text transform="translate(918 424) rotate(10)">β</text>
      </g>
    </g>
  </svg>
</section>
</body>
</html>
```
FILE: styles.css
```css
* { box-sizing: border-box; }
body { margin: 0; display: flex; height: 100vh; overflow: hidden; background: #fff; font-family: Roboto, "Noto Sans", sans-serif; font-size: 9px; line-height: 10px; color: #333; }
.defs { position: absolute; width: 0; height: 0; }
button { border: 0; padding: 0; margin: 0; background: none; font: inherit; color: inherit; white-space: nowrap; display: flex; align-items: center; justify-content: center; }
svg { flex: none; display: block; }
.i { width: 14px; height: 14px; }
.a { width: 5px; height: 3px; }
.svgb { font-family: "Noto Sans", sans-serif; font-weight: bold; }

.app { flex: 0 0 61.5%; min-width: 0; display: flex; flex-direction: column; background: #f5f5f6; border-right: 1px solid #77797c; overflow: hidden; }
.title { flex: 0 0 27px; display: flex; align-items: center; padding-top: 4px; background: linear-gradient(to right, #f8f8f9, #f2f2f4 40%, #eceef5 60%, #f2f4f8); border-bottom: 1px solid #a5a7aa; }
.logo { align-self: stretch; flex: 0 0 57px; display: flex; justify-content: flex-end; align-items: center; padding-right: 4px; overflow: hidden; background: #fff; border-right: 1px solid #b5b5b5; color: #d8402f; font: italic 12px/16px "Open Sans", sans-serif; }
.play { width: 16px; align-self: stretch; border-right: 1px solid #aaa; }
.play svg { width: 6px; height: 10px; }
.quick { display: flex; align-items: center; margin-left: 21px; }
.quick button { width: 20px; }
.quick button + svg.a { margin: 0 2px; }
.title h1 { flex: 1; margin: 0; text-align: center; font-size: 9px; font-weight: normal; color: #222; }
.search { flex: 0 0 151px; height: 17px; display: flex; align-items: center; gap: 2px; padding: 0 2px; margin-right: 2px; border: 1px solid #444; background: #f4f5f9; }
.search input { flex: 1; width: 0; min-width: 0; border: 0; padding: 0; background: none; font: inherit; color: #555; }
.search input::placeholder { color: #666; opacity: 1; }
.wctl { display: flex; align-items: center; color: #333; }
.wctl button { width: 20px; }
.wctl .a { margin: 0 2px; }
.wctl .q { font-size: 13px; font-weight: bold; }

.ribbon { flex: 0 0 65px; display: flex; background: #f7f7f8; border-bottom: 1px solid #8f9194; padding-top: 4px; }
.sep { width: 1px; flex: none; background: #d8d8d8; margin: 0 1px; }
.big { flex: none; flex-direction: column; justify-content: flex-start; padding-top: 4px; position: relative; text-align: center; }
.big .i { width: 15px; height: 15px; }
.big.mid { padding-top: 10px; }
.big > .a { position: absolute; bottom: 7px; left: 50%; margin-left: -2px; }
.w34 { width: 34px; } .w44 { width: 44px; } .w46 { width: 46px; }
.on { background: #a9a9a9; border: 1px solid #888; color: #222; margin-left: 2px; padding-top: 8px; }
.wide { width: 20px; height: 16px; }
.stack { flex: none; display: grid; grid-template-rows: repeat(3, 19px); align-content: center; padding-left: 5px; }
.stack button { justify-content: flex-start; gap: 5px; }
.s1 { width: 132px; } .s2 { width: 84px; } .s3 { width: 54px; padding-left: 1px; } .s4 { width: 64px; padding-left: 1px; }

.stage { flex: 1; min-height: 0; display: flex; flex-direction: column; background: radial-gradient(ellipse 500px 300px at 130px 30px, #fff 45%, rgba(255,255,255,0) 100%), linear-gradient(to bottom, #eceff5 0, #e2e5ee 12%, #dde0ea 30%, #dbdfe8 50%, #e6e9ef 58%, #f5f6f8 68%, #fcfcfd 76%, #fbfbfc 100%); }
.tabrow { flex: 0 0 17px; display: flex; justify-content: space-between; }
.tabs { display: grid; grid-template-columns: 30px 51px 43px 43px 80px 70px 106px 91px 108px; }
.tabs button { background: #cfcfd0; border-right: 1px solid #8e8e8e; border-bottom: 1px solid #8e8e8e; }
.tabs button:first-child { justify-content: flex-start; }
.docctl { display: flex; align-items: flex-end; padding-right: 5px; color: #888; }
.docctl button { width: 20px; }
.docctl .i { height: 13px; }
.split { flex: 1; min-height: 0; display: flex; }
.panel { flex: 0 0 137px; min-width: 0; position: relative; display: flex; flex-direction: column; background: #f5f5f6; border-right: 1px solid #8c8e91; }
.grip { height: 17px; display: flex; justify-content: center; align-items: center; padding-right: 38px; border-top: 3px solid #f0f0f0; border-bottom: 1px solid #e2e2e2; }
.grip i, .bump i { width: 5px; height: 5px; border: 1px solid #999; border-radius: 50%; }
.ptabs { display: flex; height: 21px; border-top: 1px solid #999; border-bottom: 1px solid #999; background: #d0d0d1; padding-right: 2px; }
.ptabs button { flex: 0 0 30px; border-right: 1px solid #999; }
.ptabs button:first-child { flex-basis: 26px; }
.ptabs button:nth-child(4) { flex-basis: 22px; justify-content: flex-end; overflow: hidden; }
.ptabs .sm { flex: 1; background: #f7f7f8; border: 1px solid #ccc; margin-top: 4px; }
.ptabs .sm svg { width: 4px; height: 6px; }
.filter { width: 132px; height: 18px; margin: 1px 0 0; border: 1px solid #d6d6d6; border-left: 0; background: #f6f6f7; padding: 0; }
.ftree { list-style: none; margin: 0; padding: 0; height: 214px; display: flex; flex-direction: column; overflow: hidden; color: #222; }
.ftree li { flex: 1; display: flex; align-items: center; padding-left: 2px; white-space: nowrap; }
.ftree .root { padding-left: 0; }
.rollback { height: 3px; background: #3a7fa8; margin-right: 1px; }
.hscroll { margin-top: auto; margin-bottom: 3px; height: 13px; display: flex; justify-content: space-between; align-items: center; padding-right: 5px; }
.hscroll i { width: 80px; height: 11px; background: #c9c9ca; }
.hscroll svg { width: 5px; height: 8px; }
.bump { position: absolute; left: 135px; top: 257px; width: 8px; height: 29px; display: flex; align-items: center; justify-content: center; background: #f5f5f6; border: 1px solid #999; border-left: 0; z-index: 1; }
.view { flex: 1; position: relative; display: flex; flex-direction: column; min-width: 0; }
.canvas { position: absolute; inset: 0; width: 100%; height: 100%; }
.floor { fill: #a9acb2; stroke: #22242a; stroke-width: .7; }
.flank { fill: #9094a3; stroke: #22242a; stroke-width: .8; }
.top { fill: #a6a9af; stroke: #22242a; stroke-width: .8; }
.edge { stroke: #14161b; stroke-width: 1; }
.front { fill: #4d505a; stroke: #15171c; }
.body { fill: #4d505a; }
.seam { stroke: #4d505a; stroke-width: 2; }
.end { fill: #777a89; }
.ax { font-size: 8px; }
.hud { position: relative; display: flex; align-items: center; margin: 4px 0 0 199px; opacity: .85; }
.hud button { width: 20px; }
.hud .a { margin: 0 3px 0 2px; opacity: .7; }
.side { position: relative; align-self: flex-end; width: 20px; margin-top: 3px; border: 1px solid #999; border-right: 0; background: #cfcfd2; }
.side button { width: 100%; height: 18px; border-bottom: 1px solid #999; }
.side button:last-child { border-bottom: 0; }
.side .sel { background: #fafafb; }

.btabs { flex: 0 0 13px; display: flex; border-top: 1px solid #999; }
.btabs i { width: 15px; background: #a8a8aa; }
.btabs button { width: 86px; background: #d0d0d1; border-right: 1px solid #888; }
.btabs .cur { width: 43px; background: #fff; font-weight: bold; color: #111; }
.fbar { flex: 0 0 25px; display: flex; align-items: center; border-bottom: 1px solid #a0a0a2; }
.lead { flex: 0 0 66px; display: flex; align-items: center; justify-content: space-between; padding-right: 5px; height: 18px; border-right: 1px solid #999; }
.lead .i:first-child { width: 12px; }
.faded { opacity: .45; }
.filters { flex: 0 0 588px; display: flex; justify-content: space-between; padding-left: 5px; }
.filters svg { width: 18px; height: 15px; }
.fbar .sep { height: 22px; background: #777; margin-left: 7px; }
.status { flex: 0 0 14px; display: flex; align-items: center; color: #222; }
.ver { flex: 1; }
.mode { flex: 0 0 78px; text-align: center; border-left: 1px solid #ddd; border-right: 1px solid #ddd; }
.unit { width: 92px; gap: 5px; }
.up { transform: rotate(180deg); }
.tag { margin: 0 16px 0 22px; }

.sheet { flex: 1; min-width: 0; overflow: hidden; border-left: 2px solid #d5d6d8; padding: 11px 0 0 10px; font-family: Lato, "Noto Sans", sans-serif; font-size: 12px; line-height: 16px; color: #111; }
table { width: 100%; table-layout: fixed; border-collapse: collapse; border-top: 1px solid #333; border-bottom: 1px solid #333; }
.c1 { width: 235px; } .c2 { width: 95px; } .c3 { width: 73px; }
th { text-align: left; font-size: 11px; font-weight: normal; background: #b8cbe4; color: #0f1d33; padding: 0 0 0 2px; border-left: 1px solid #333; border-right: 1px solid #333; vertical-align: top; white-space: nowrap; }
td { text-align: center; font-weight: bold; padding: 0; border-right: 1px solid #333; vertical-align: top; white-space: nowrap; }
td:last-child { border-right: 0; }
.t-b { margin-top: 15px; line-height: 15px; }
.t-b tr { height: 32px; }
.t-b tr:last-child { height: 34px; }
.t-c { margin-top: 31px; }
.t-c td:nth-child(3) { border-right: 0; }
.t-c .long { text-align: left; padding-left: 18px; }
.drawing { width: 490px; height: 230px; margin: 9px 0 0 -9px; }
.dim { fill: #222; stroke: none; font: 23px "Liberation Sans", sans-serif; text-anchor: middle; }
```
